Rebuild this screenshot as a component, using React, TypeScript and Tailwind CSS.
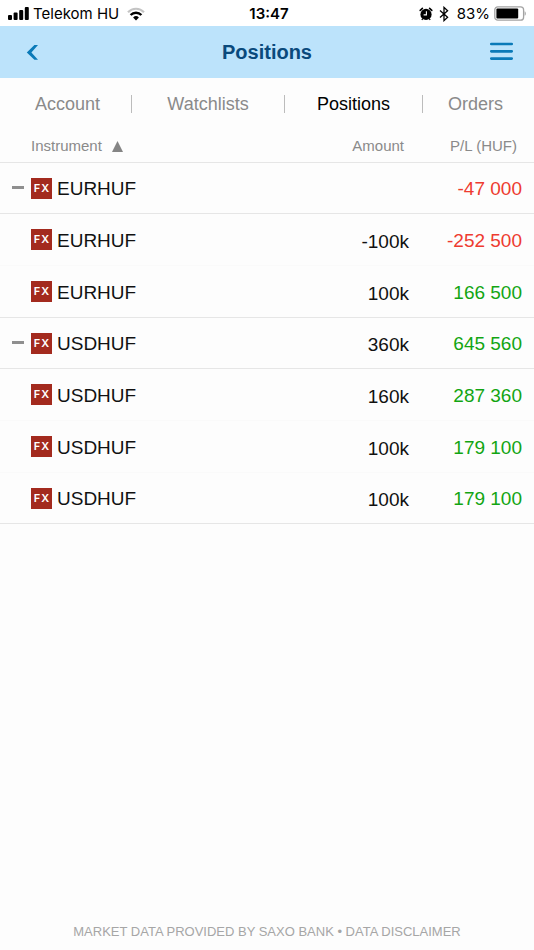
import React from "react";

type Row = {
  name: string;
  amount: string;
  pl: string;
  height: string;
  group?: boolean;
  last?: boolean;
};

const rows: Row[] = [
  { name: "EURHUF", amount: "", pl: "-47 000", height: "h-[51px]", group: true },
  { name: "EURHUF", amount: "-100k", pl: "-252 500", height: "h-[52px]" },
  { name: "EURHUF", amount: "100k", pl: "166 500", height: "h-[52px]", last: true },
  { name: "USDHUF", amount: "360k", pl: "645 560", height: "h-[51px]", group: true },
  { name: "USDHUF", amount: "160k", pl: "287 360", height: "h-[52px]" },
  { name: "USDHUF", amount: "100k", pl: "179 100", height: "h-[52px]" },
  { name: "USDHUF", amount: "100k", pl: "179 100", height: "h-[51px]", last: true },
];

const tabs = ["Account", "Watchlists", "Positions", "Orders"];

function StatusBar() {
  return (
    <div className="grid h-[26px] grid-cols-[1fr_auto_1fr] items-center bg-white px-2 pt-px font-['Inter',sans-serif] text-[15px] leading-[25px] text-black">
      <div className="flex items-center">
        <svg width="21" height="13" viewBox="0 0 21 13" aria-hidden="true">
          <rect x="0" y="8" width="4" height="5" rx="1" />
          <rect x="5.6" y="5.5" width="4" height="7.5" rx="1" />
          <rect x="11.2" y="3" width="4" height="10" rx="1" />
          <rect x="16.8" y="0" width="4" height="13" rx="1" />
        </svg>
        <span className="ml-1 whitespace-nowrap">Telekom HU</span>
        <svg className="ml-2" width="18" height="14" viewBox="0 0 18 14" fill="none" aria-hidden="true">
          <path d="M1 5.2C5.4.6 12.6.6 17 5.2" stroke="#c4c4c4" strokeWidth="2.2" />
          <path d="M3.6 8C6.6 4.9 11.4 4.9 14.4 8" stroke="#000" strokeWidth="2.4" />
          <path d="M6.1 10.4a4.2 4.2 0 0 1 5.8 0L9 13.4z" fill="#000" />
        </svg>
      </div>
      <span className="pl-1 font-semibold">13:47</span>
      <div className="flex items-center justify-end">
        <svg width="14" height="14" viewBox="0 0 14 14" aria-hidden="true">
          <circle cx="7" cy="7.4" r="5.6" />
          <path d="M1.2 3.4 3.4 1.4M12.8 3.4 10.6 1.4" stroke="#000" strokeWidth="1.6" strokeLinecap="round" />
          <path d="M2.8 12.8l1-1.2M11.2 12.8l-1-1.2" stroke="#000" strokeWidth="1.3" />
          <path d="M7.4 4.2v3.7H4.6" fill="none" stroke="#fff" strokeWidth="1.1" />
        </svg>
        <svg className="ml-1.5" width="10" height="16" viewBox="0 0 10 16" fill="none" aria-hidden="true">
          <path d="M1 4.4 8.6 11.2 5 14.6V1.4L8.6 4.8 1 11.6" stroke="#000" strokeWidth="1.3" />
        </svg>
        <span className="ml-2">83%</span>
        <svg className="ml-1" width="32" height="15" viewBox="0 0 32 15" aria-hidden="true">
          <rect x="0.8" y="0.8" width="28.8" height="13.4" rx="3" fill="#fff" stroke="#a3a3a3" strokeWidth="1.3" />
          <rect x="2.4" y="2.4" width="21.8" height="10.2" rx="1" />
          <path d="M30.6 5.2c1.6.6 1.6 4 0 4.6z" fill="#a3a3a3" />
        </svg>
      </div>
    </div>
  );
}

function FxBadge() {
  return (
    <span className="flex size-[21px] shrink-0 items-center justify-center gap-px bg-[#a32a1e] font-['Inter',sans-serif] text-[11px] leading-none font-semibold text-white">
      <span>F</span>
      <span>X</span>
    </span>
  );
}

export default function App() {
  return (
    <div className="flex min-h-screen flex-col bg-[#fdfdfd] font-['Liberation_Sans',Arial,sans-serif] text-[#111]">
      <StatusBar />
      <header className="grid h-[52px] grid-cols-[1fr_auto_1fr] items-center bg-[#bce3fb] px-5">
        <button type="button" aria-label="Back" className="flex h-8 w-6 items-center justify-center">
          <svg width="14" height="16" viewBox="0 0 14 16" aria-hidden="true">
            <path d="M9.4 1H13L6.4 8.4 13 15.8H9.4L1.8 8.4z" fill="#0a7ab8" />
          </svg>
        </button>
        <h1 className="text-[20px] font-bold text-[#0a4a7c]">Positions</h1>
        <button type="button" aria-label="Menu" className="flex h-8 items-center justify-end">
          <svg width="25" height="20" viewBox="0 0 25 20" aria-hidden="true">
            <path d="M2.3 2h20.4M2.3 9.3h20.4M2.3 16.6h20.4" stroke="#0a7ab8" strokeWidth="2.7" strokeLinecap="round" />
          </svg>
        </button>
      </header>

      <nav className="grid h-[52px] grid-cols-[132fr_153fr_138fr_111fr] items-center text-[18px]">
        {tabs.map((tab, i) => (
          <a
            key={tab}
            href="#"
            className={`flex h-[18px] items-center justify-center ${i < 3 ? "border-r border-[#bcbcbc]" : "pr-1.5"} ${i === 0 ? "pl-1" : ""} ${tab === "Positions" ? "text-black" : "text-[#8a8a8a]"}`}
          >
            {tab}
          </a>
        ))}
      </nav>

      <table className="w-full table-fixed border-separate border-spacing-0">
        <colgroup>
          <col />
          <col className="w-[113px]" />
          <col className="w-[113px]" />
        </colgroup>
        <thead>
          <tr className="h-[33px] text-[15px] text-[#8a8a8a]">
            <th scope="col" className="border-b border-[#e6e6e6] p-0 pl-[31px] text-left font-normal">
              <button type="button" className="flex items-center gap-2.5">
                Instrument
                <svg width="11" height="11" viewBox="0 0 11 11" aria-hidden="true">
                  <path d="M5.5 0 11 11H0z" fill="#858585" />
                </svg>
              </button>
            </th>
            <th scope="col" className="border-b border-[#e6e6e6] p-0 pr-[17px] text-right font-normal">Amount</th>
            <th scope="col" className="border-b border-[#e6e6e6] p-0 pr-[17px] text-right font-normal">P/L (HUF)</th>
          </tr>
        </thead>
        <tbody>
          {rows.map((row, i) => {
            const line = row.group || row.last ? "border-b border-[#e6e6e6]" : "border-b border-[#fafafa]";
            return (
              <tr key={i} className={row.height}>
                <td className={`p-0 ${line}`}>
                  <div className="flex items-center">
                    <div className="flex w-[31px] shrink-0 pl-3">
                      {row.group && (
                        <button type="button" aria-label={`Collapse ${row.name}`} className="flex h-6 w-3 items-center">
                          <span className="mb-[2px] h-[3px] w-full bg-[#8f8f8f]" />
                        </button>
                      )}
                    </div>
                    <FxBadge />
                    <span className="ml-[5px] pt-[2px] text-[19px] leading-6">{row.name}</span>
                  </div>
                </td>
                <td className={`p-0 pt-1 pr-3 text-right text-[19px] leading-6 whitespace-nowrap ${line}`}>
                  {row.amount}
                </td>
                <td
                  className={`p-0 pt-[2px] pr-3 text-right text-[19px] leading-6 whitespace-nowrap ${line} ${row.pl.startsWith("-") ? "text-[#ee3b30]" : "text-[#12a512]"}`}
                >
                  {row.pl}
                </td>
              </tr>
            );
          })}
        </tbody>
      </table>

      <footer className="mt-auto pb-2 text-center text-[13px] leading-5 text-[#a6a6a6]">
        MARKET DATA PROVIDED BY SAXO BANK • <a href="#">DATA DISCLAIMER</a>
      </footer>
    </div>
  );
}
